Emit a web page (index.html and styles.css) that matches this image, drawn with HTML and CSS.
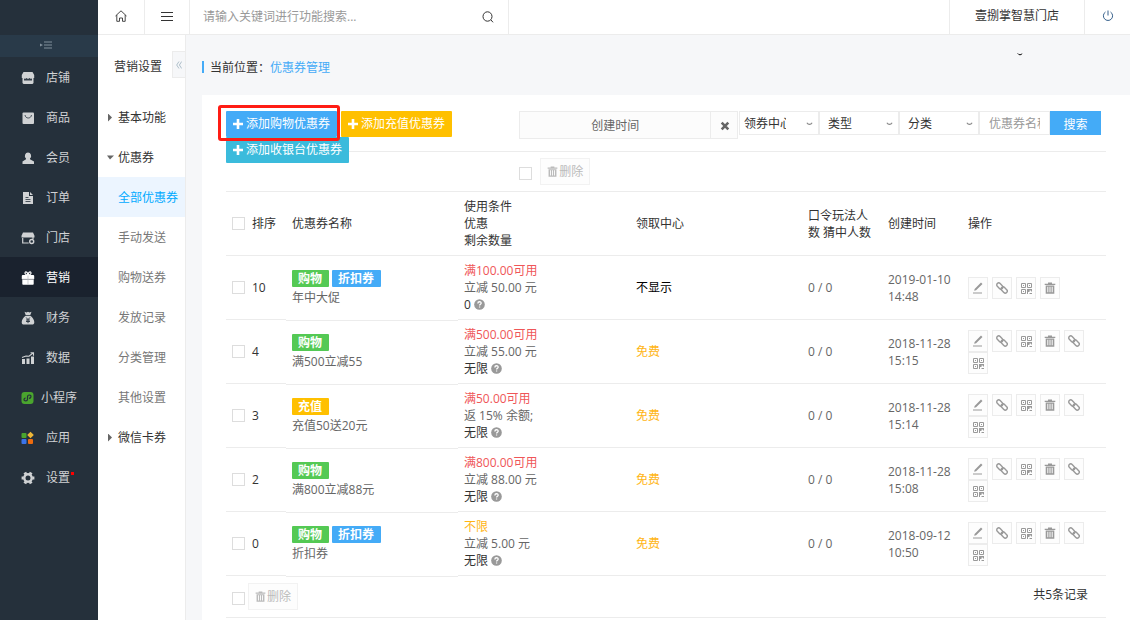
FILE: index.html
```html
<!DOCTYPE html>
<html lang="zh-CN">
  <head>
    <meta charset="UTF-8" />
    <meta name="viewport" content="width=device-width, initial-scale=1.0" />
    <title>优惠券管理</title>
    <link rel="stylesheet" href="styles.css">
  </head>
  <body>
    <svg class="sprite" aria-hidden="true">
      <symbol id="i-plus" viewBox="0 0 10 10"><path d="M3.7 0h2.6v3.7H10v2.6H6.3V10H3.7V6.3H0V3.7h3.7z" /></symbol>
      <symbol id="i-edit" viewBox="0 0 12 12"><path d="M2.200 8.800l.4-1.900L9 .6l1.500 1.400-6.400 6.200zM1 10.500h9v1H1z" /></symbol>
      <symbol id="i-link" viewBox="0 0 12 12">
        <g fill="none" stroke="currentColor" stroke-width="1.400">
          <rect x="0.300" y="2" width="7" height="4" rx="2" transform="rotate(45 3.800 4)" />
          <rect x="4.700" y="6" width="7" height="4" rx="2" transform="rotate(45 8.200 8)" />
        </g>
      </symbol>
      <symbol id="i-qr" viewBox="0 0 12 12">
        <g fill="none" stroke="currentColor">
          <path d="M1.500 1.500h4v4h-4zM7.500 1.500h4v4h-4zM1.500 7.500h4v4h-4z" />
        </g>
        <path d="M3 3h1v1H3zM9 3h1v1H9zM3 9h1v1H3zM7 7h5v2.500h-1V8.500H9.500V10H8v2H7zM9.500 11H12v1H9.500z" />
      </symbol>
      <symbol id="i-trash" viewBox="0 0 12 12"><path fill-rule="evenodd" d="M4 .5h4v1.200h3.300V3H.7V1.700H4zM1.700 3.500h8.600V11.700H1.700zM3.300 4.700v5.600h1V4.700zM5.500 4.700v5.600h1V4.700zM7.700 4.700v5.600h1V4.700z" /></symbol>
      <symbol id="i-help" viewBox="0 0 12 12">
        <circle cx="6" cy="6" r="5.800" />
        <path d="M4.200 4.800c0-2.400 3.700-2.300 3.600-.2 0 1.200-1.700 1.200-1.700 2.600M6.100 8.100v1.300" fill="none" stroke="#fff" stroke-width="1.400" />
      </symbol>
      <symbol id="i-down" viewBox="0 0 8 4"><path d="M1 .6c1.500 2.400 4.500 2.400 6 0" fill="none" stroke="currentColor" stroke-width="1.300" /></symbol>
    </svg>

    <div class="layout">
      <nav class="sidebar">
        <div class="logo"></div>
        <button type="button" class="toggle" aria-label="收起">
          <svg width="12" height="8" viewBox="0 0 12 8"><path d="M3 4L0 2.500v3zM4 .5h8v1H4zM4 3.500h8v1H4zM4 6.500h8v1H4z" fill="currentColor" /></svg>
        </button>
        <a href="#"><svg viewBox="0 0 14 14"><path d="M2.500 1h9L13.200 4v3h-.7v5l-1 1h-9l-1-1V7H.8V4z" /><path d="M3 7.200l1 .8 1.500-1L7 8l1.500-1L10 8l1-.8v2.300H3z" fill="#333d48" /></svg>店铺</a>
        <a href="#"><svg viewBox="0 0 14 14"><rect x="1.500" y="1.500" width="11.500" height="11.500" rx="1" /><path d="M4 4c.5 4 6 4 6.500 0" fill="none" stroke="#25303b" stroke-width="0.800" /></svg>商品</a>
        <a href="#"><svg viewBox="0 0 14 14"><path d="M7 1.500a3.200 3.400 0 0 1 2 6v.7l4 2.300v2.500H1.500v-2.500L5 8.200v-.7a3.200 3.400 0 0 1 2-6z" /></svg>会员</a>
        <a href="#"><svg viewBox="0 0 14 14"><path d="M2 1h6v4h4v8H2zM9 1l3 3H9z" /><path d="M4.500 6.500h3M4.500 8.500h5M4.500 10.500h5" stroke="#25303b" stroke-width="0.800" /></svg>订单</a>
        <a href="#"><svg viewBox="0 0 14 14"><path d="M2 1.500h10l1.500 3.200V6.500H.5V4.700z" /><path d="M1.700 7v5h6M12 6v2" fill="none" stroke="currentColor" stroke-width="1.200" /><circle cx="10.700" cy="10.500" r="2" fill="#25303b" stroke="currentColor" stroke-width="1.400" /></svg>门店</a>
        <a href="#" class="active"><svg viewBox="0 0 14 14"><path d="M1.800 4h10.400q1 0 1 1v3H.8V5q0-1 1-1zM1.300 8.400h11.400V13q0 .8-.8.8H2.100q-.8 0-.8-.8z" /><path d="M7 4v9.800M1 8.200h12" stroke="#b9bcc0" stroke-width="0.700" /><path d="M7 4C4.500 4 3.500 2.500 4.200 1.300S6.800 1.500 7 4c.2-2.500 2.100-3.900 2.800-2.700S9.500 4 7 4" fill="none" stroke="currentColor" stroke-width="1.200" /></svg>营销</a>
        <a href="#"><svg viewBox="0 0 14 14"><path d="M3.500.8l2 .7L7 .7l1.500.8 2-.7L9.300 4H4.700zM4.700 4.700h4.600c2.300 1.500 4 4.300 4 6.500 0 1.500-.8 2.300-2.300 2.300H3c-1.500 0-2.300-.8-2.300-2.300 0-2.200 1.700-5 4-6.500z" /><path d="M5.200 6.500L7 8.700l1.800-2.200M7 8.700v3.500M5 9h4M5 10.500h4" fill="none" stroke="#25303b" stroke-width="0.900" /></svg>财务</a>
        <a href="#"><svg viewBox="0 0 14 14"><path d="M1 8h3v5H1zM5.500 7.500h3V13h-3zM10 5.500h3V13h-3z" /><path d="M1 6.500l4-1.500 3 .2L12 2M9.500 1.700h3v3" fill="none" stroke="currentColor" stroke-width="1.100" /></svg>数据</a>
        <a href="#" class="wide"><svg viewBox="0 0 14 14"><rect x="0.500" y="1" width="12" height="12" rx="3" fill="#4aa52e" /><path d="M8 7.300c2.500 0 2.700-3.300.3-3.300C6.800 4 6.500 5 6.500 6v2.200c0 2.300-3.500 2.300-3.500.3 0-.9.7-1.500 1.700-1.500" fill="none" stroke="#25303b" stroke-width="1.200" /></svg>小程序</a>
        <a href="#"><svg viewBox="0 0 14 14"><rect x="0.500" y="2" width="5" height="5" rx="1" fill="#4aa52e" /><path d="M9.500.7l3.300 3.300-3.300 3.300L6.200 4z" fill="#edb738" /><rect x="0.500" y="8" width="5" height="5" rx="1" fill="#3b73e8" /><rect x="7" y="8" width="5" height="5" rx="1" fill="#ee6b0e" /></svg>应用</a>
        <a href="#"><svg viewBox="0 0 14 14"><circle cx="7" cy="7" r="3.700" fill="none" stroke="currentColor" stroke-width="2.400" /><path d="M2.700 7H.6M13.400 7h-2.100M4.900 3.300L3.800 1.400M10.200 12.600l-1.100-1.900M9.100 3.300l1.100-1.900M3.800 12.600l1.100-1.900" stroke="currentColor" stroke-width="3" /></svg>设置<i class="dot"></i></a>
      </nav>

      <div class="page">
        <header class="topbar">
          <button type="button" class="home" aria-label="首页">
            <svg width="12" height="12" viewBox="0 0 12 12"><path d="M.5 6L6 .8 11.500 6M1.800 5v6.300h2.700V8h3v3.300h2.700V5" fill="none" stroke="currentColor" stroke-width="0.900" /></svg>
          </button>
          <button type="button" class="menu" aria-label="菜单">
            <svg width="12" height="9" viewBox="0 0 12 9"><path d="M0 .5h12M0 4.500h12M0 8.500h12" stroke="currentColor" /></svg>
          </button>
          <form class="search">
            <input type="text" placeholder="请输入关键词进行功能搜索..." aria-label="功能搜索" />
            <button type="button" aria-label="搜索功能">
              <svg width="12" height="12" viewBox="0 0 12 12"><path d="M9 9l2 2.300M10 5.500a4.500 4.700 0 1 1-9 0 4.500 4.700 0 0 1 9 0z" fill="none" stroke="currentColor" /></svg>
            </button>
          </form>
          <a href="#" class="store">壹捌掌智慧门店<svg class="store-arrow"><use href="#i-down" /></svg></a>
          <button type="button" class="power" aria-label="退出">
            <svg width="12" height="12" viewBox="0 0 12 12"><path d="M6 .5v5M3.500 2a4.600 4.600 0 1 0 5 0" fill="none" stroke="currentColor" /></svg>
          </button>
        </header>

        <div class="body">
          <nav class="submenu">
            <h3>营销设置</h3>
            <button type="button" class="collapse" aria-label="收起菜单">
              <svg width="6" height="8" viewBox="0 0 6 8"><path d="M3 .5L.7 4 3 7.500M5.700.5L3.400 4l2.300 3.500" fill="none" stroke="currentColor" /></svg>
            </button>
            <a href="#" class="group">基本功能</a>
            <a href="#" class="group open">优惠券</a>
            <a href="#" class="active">全部优惠券</a>
            <a href="#">手动发送</a>
            <a href="#">购物送券</a>
            <a href="#">发放记录</a>
            <a href="#">分类管理</a>
            <a href="#">其他设置</a>
            <a href="#" class="group">微信卡券</a>
          </nav>

          <main>
            <div class="position">当前位置：<a href="#">优惠券管理</a></div>

            <div class="card">
              <div class="toolbar">
                <div class="add-buttons">
                  <button type="button" class="btn blue marked"><svg><use href="#i-plus" /></svg>添加购物优惠券</button>
                  <button type="button" class="btn yellow"><svg><use href="#i-plus" /></svg>添加充值优惠券</button>
                  <button type="button" class="btn cyan"><svg><use href="#i-plus" /></svg>添加收银台优惠券</button>
                </div>
                <form class="filters">
                  <button type="button" class="date">创建时间</button>
                  <button type="button" class="clear" aria-label="清除">
                    <svg width="10" height="10" viewBox="0 0 10 10"><path d="M1.700 1.700l6.600 6.600M8.300 1.700L1.700 8.300" stroke="currentColor" stroke-width="2.600" /></svg>
                  </button>
                  <label class="select first">
                    <select aria-label="领券中心"><option>领券中心</option></select>
                    <svg><use href="#i-down" /></svg>
                  </label>
                  <label class="select">
                    <select aria-label="类型"><option>类型</option></select>
                    <svg><use href="#i-down" /></svg>
                  </label>
                  <label class="select">
                    <select aria-label="分类"><option>分类</option></select>
                    <svg><use href="#i-down" /></svg>
                  </label>
                  <input type="text" class="keyword" placeholder="优惠券名称" aria-label="优惠券名称" />
                  <button type="button" class="submit">搜索</button>
                </form>
              </div>

              <div class="batch">
                <div class="batch-inner">
                  <input type="checkbox" aria-label="全选" />
                  <button type="button" class="delete" disabled><svg><use href="#i-trash" /></svg>删除</button>
                </div>
              </div>

              <table>
                <colgroup>
                  <col class="col-sort" />
                  <col />
                  <col />
                  <col />
                  <col class="col-small" />
                  <col class="col-small" />
                  <col class="col-action" />
                </colgroup>
                <thead>
                  <tr>
                    <th><label class="check"><input type="checkbox" />排序</label></th>
                    <th>优惠券名称</th>
                    <th>使用条件<br />优惠<br />剩余数量</th>
                    <th>领取中心</th>
                    <th>口令玩法人数 猜中人数</th>
                    <th>创建时间</th>
                    <th>操作</th>
                  </tr>
                </thead>
                <tbody>
                  <tr>
                    <td><label class="check"><input type="checkbox" />10</label></td>
                    <td class="name">
                      <div class="tags"><span class="tag green">购物</span><span class="tag blue">折扣券</span></div>
                      年中大促
                    </td>
                    <td>
                      <div class="red">满100.00可用</div>
                      <div>立减 50.00 元</div>
                      <div class="dark">0 <svg class="help"><use href="#i-help" /></svg></div>
                    </td>
                    <td class="black">不显示</td>
                    <td>0 / 0</td>
                    <td>2019-01-10 14:48</td>
                    <td>
                      <div class="actions">
                        <button type="button" aria-label="编辑"><svg><use href="#i-edit" /></svg></button>
                        <button type="button" aria-label="链接"><svg><use href="#i-link" /></svg></button>
                        <button type="button" aria-label="二维码"><svg><use href="#i-qr" /></svg></button>
                        <button type="button" aria-label="删除"><svg><use href="#i-trash" /></svg></button>
                      </div>
                    </td>
                  </tr>
                  <tr>
                    <td><label class="check"><input type="checkbox" />4</label></td>
                    <td class="name">
                      <div class="tags"><span class="tag green">购物</span></div>
                      满500立减55
                    </td>
                    <td>
                      <div class="red">满500.00可用</div>
                      <div>立减 55.00 元</div>
                      <div class="dark">无限 <svg class="help"><use href="#i-help" /></svg></div>
                    </td>
                    <td class="orange">免费</td>
                    <td>0 / 0</td>
                    <td>2018-11-28 15:15</td>
                    <td>
                      <div class="actions">
                        <button type="button" aria-label="编辑"><svg><use href="#i-edit" /></svg></button>
                        <button type="button" aria-label="链接"><svg><use href="#i-link" /></svg></button>
                        <button type="button" aria-label="二维码"><svg><use href="#i-qr" /></svg></button>
                        <button type="button" aria-label="删除"><svg><use href="#i-trash" /></svg></button>
                        <button type="button" aria-label="领取链接"><svg><use href="#i-link" /></svg></button>
                        <button type="button" aria-label="领取二维码"><svg><use href="#i-qr" /></svg></button>
                      </div>
                    </td>
                  </tr>
                  <tr>
                    <td><label class="check"><input type="checkbox" />3</label></td>
                    <td class="name">
                      <div class="tags"><span class="tag yellow">充值</span></div>
                      充值50送20元
                    </td>
                    <td>
                      <div class="red">满50.00可用</div>
                      <div>返 15% 余额;</div>
                      <div class="dark">无限 <svg class="help"><use href="#i-help" /></svg></div>
                    </td>
                    <td class="orange">免费</td>
                    <td>0 / 0</td>
                    <td>2018-11-28 15:14</td>
                    <td>
                      <div class="actions">
                        <button type="button" aria-label="编辑"><svg><use href="#i-edit" /></svg></button>
                        <button type="button" aria-label="链接"><svg><use href="#i-link" /></svg></button>
                        <button type="button" aria-label="二维码"><svg><use href="#i-qr" /></svg></button>
                        <button type="button" aria-label="删除"><svg><use href="#i-trash" /></svg></button>
                        <button type="button" aria-label="领取链接"><svg><use href="#i-link" /></svg></button>
                        <button type="button" aria-label="领取二维码"><svg><use href="#i-qr" /></svg></button>
                      </div>
                    </td>
                  </tr>
                  <tr>
                    <td><label class="check"><input type="checkbox" />2</label></td>
                    <td class="name">
                      <div class="tags"><span class="tag green">购物</span></div>
                      满800立减88元
                    </td>
                    <td>
                      <div class="red">满800.00可用</div>
                      <div>立减 88.00 元</div>
                      <div class="dark">无限 <svg class="help"><use href="#i-help" /></svg></div>
                    </td>
                    <td class="orange">免费</td>
                    <td>0 / 0</td>
                    <td>2018-11-28 15:08</td>
                    <td>
                      <div class="actions">
                        <button type="button" aria-label="编辑"><svg><use href="#i-edit" /></svg></button>
                        <button type="button" aria-label="链接"><svg><use href="#i-link" /></svg></button>
                        <button type="button" aria-label="二维码"><svg><use href="#i-qr" /></svg></button>
                        <button type="button" aria-label="删除"><svg><use href="#i-trash" /></svg></button>
                        <button type="button" aria-label="领取链接"><svg><use href="#i-link" /></svg></button>
                        <button type="button" aria-label="领取二维码"><svg><use href="#i-qr" /></svg></button>
                      </div>
                    </td>
                  </tr>
                  <tr>
                    <td><label class="check"><input type="checkbox" />0</label></td>
                    <td class="name">
                      <div class="tags"><span class="tag green">购物</span><span class="tag blue">折扣券</span></div>
                      折扣券
                    </td>
                    <td>
                      <div class="orange">不限</div>
                      <div>立减 5.00 元</div>
                      <div class="dark">无限 <svg class="help"><use href="#i-help" /></svg></div>
                    </td>
                    <td class="orange">免费</td>
                    <td>0 / 0</td>
                    <td>2018-09-12 10:50</td>
                    <td>
                      <div class="actions">
                        <button type="button" aria-label="编辑"><svg><use href="#i-edit" /></svg></button>
                        <button type="button" aria-label="链接"><svg><use href="#i-link" /></svg></button>
                        <button type="button" aria-label="二维码"><svg><use href="#i-qr" /></svg></button>
                        <button type="button" aria-label="删除"><svg><use href="#i-trash" /></svg></button>
                        <button type="button" aria-label="领取链接"><svg><use href="#i-link" /></svg></button>
                        <button type="button" aria-label="领取二维码"><svg><use href="#i-qr" /></svg></button>
                      </div>
                    </td>
                  </tr>
                </tbody>
              </table>

              <div class="table-footer">
                <input type="checkbox" aria-label="全选" />
                <button type="button" class="delete" disabled><svg><use href="#i-trash" /></svg>删除</button>
                <span class="total">共5条记录</span>
              </div>
            </div>
          </main>
        </div>
      </div>
    </div>
  </body>
</html>
```
FILE: styles.css
```css
* {
  box-sizing: border-box;
}

body {
  margin: 0;
  background-color: #f6f7f9;
  color: #666;
  font-family: "Open Sans", "Noto Sans CJK SC", sans-serif;
  font-size: 12px;
  line-height: 17px;
}

a {
  color: inherit;
  text-decoration: none;
}

button, input, select {
  margin: 0;
  padding: 0;
  border: 0;
  background: none;
  color: inherit;
  font: inherit;
}

button {
  display: flex;
  align-items: center;
  justify-content: center;
  cursor: pointer;
}

svg {
  flex-shrink: 0;
  fill: currentColor;
}

input[type="checkbox"] {
  appearance: none;
  flex-shrink: 0;
  width: 13px;
  height: 13px;
  border: 1px solid #ddd;
  background-color: #fff;
}

.sprite {
  display: none;
}

.layout {
  display: flex;
  min-height: 100vh;
}

/* sidebar */
.sidebar {
  flex: 0 0 98px;
  background-color: #25303b;
  color: #d0d2d4;
}

.logo {
  height: 35px;
}

.toggle {
  width: 100%;
  height: 22px;
  padding: 0 6px 2px 0;
  background-color: #293a49;
  color: #82909b;
}

.sidebar a {
  display: flex;
  align-items: center;
  gap: 11px;
  height: 40px;
  padding: 1px 0 0 21px;
}

.sidebar a.wide {
  gap: 6px;
}

.sidebar a svg {
  width: 14px;
  height: 14px;
}

.sidebar a.active {
  background-color: #1a222e;
  color: #fff;
}

.dot {
  width: 3px;
  height: 3px;
  margin: -8px 0 0 -10px;
  background-color: #f00;
}

/* topbar */
.page {
  flex: 1;
  min-width: 0;
  display: flex;
  flex-direction: column;
}

.topbar {
  display: flex;
  height: 35px;
  padding-bottom: 1px;
  background-color: #fff;
  box-shadow: inset 0 -1px #ececec;
  color: #333;
}

.home, .menu, .search {
  border-right: 1px solid #ececec;
}

.home, .menu {
  padding-bottom: 2px;
}

.home {
  width: 47px;
}

.menu {
  width: 45px;
}

.search {
  display: flex;
  width: 319px;
  padding: 0 13px;
}

.search input {
  flex: 1;
  min-width: 0;
  padding-bottom: 2px;
}

.search button {
  width: 14px;
}

input::placeholder {
  color: #999;
  opacity: 1;
}

.store {
  position: relative;
  margin-left: auto;
  width: 136px;
  border: 1px solid #ececec;
  border-width: 0 1px;
  line-height: 32px;
  text-align: center;
}

.store-arrow {
  position: absolute;
  top: 53px;
  left: 67px;
  width: 6px;
  height: 3px;
  color: #000;
}

.power {
  width: 45px;
  padding-bottom: 2px;
  color: #37618c;
}

.body {
  flex: 1;
  display: flex;
}

/* submenu */
.submenu {
  position: relative;
  flex: 0 0 88px;
  border-right: 1px solid #ececec;
  background-color: #fff;
  color: #777;
}

.submenu h3 {
  margin: 0;
  padding-left: 16px;
  height: 62px;
  color: #333;
  font-size: 12px;
  font-weight: normal;
  line-height: 64px;
}

.submenu a {
  display: flex;
  align-items: center;
  height: 40px;
  padding: 1px 0 0 20px;
}

.submenu a.active {
  background-color: #ecf5ff;
  color: #0af;
}

.submenu a.group {
  padding-left: 9px;
  color: #333;
}

.group::before {
  content: "";
  width: 11px;
  height: 8px;
  background-color: #666;
  clip-path: polygon(1px 0, 5px 4px, 1px 8px);
}

.group.open::before {
  clip-path: polygon(0 2px, 7px 2px, 3px 6px);
}

.collapse {
  position: absolute;
  top: 16px;
  right: 0;
  width: 13px;
  height: 27px;
  border: 1px solid #ececec;
  border-right: 0;
  background-color: #f6f7f9;
  color: #aebfca;
}

/* content */
main {
  flex: 1;
  min-width: 0;
  display: flex;
  flex-direction: column;
  padding-left: 16px;
}

.position {
  display: flex;
  align-items: center;
  height: 60px;
  padding-top: 4px;
  color: #333;
}

.position::before {
  content: "";
  width: 2px;
  height: 12px;
  margin-right: 6px;
  background-color: #44abf7;
}

.position a {
  color: #44abf7;
}

.card {
  flex: 1;
  padding: 16px 24px 0;
  background-color: #fff;
}

.toolbar, .batch {
  display: grid;
  grid-template-columns: 1fr 2fr;
  border-bottom: 1px solid #ececec;
}

.toolbar {
  height: 41px;
}

.batch {
  height: 40px;
}

.add-buttons {
  display: flex;
  flex-wrap: wrap;
  align-content: flex-start;
  column-gap: 4px;
}

.btn {
  position: relative;
  gap: 3px;
  height: 26px;
  padding: 0 7px 1px;
  border-radius: 1px;
  color: #fff;
}

.btn svg {
  width: 10px;
  height: 10px;
}

.blue {
  background-color: #44abf7;
}

.yellow {
  background-color: #ffc000;
}

.cyan {
  background-color: #3bbbdc;
}

.green {
  background-color: #54c954;
}

.marked {
  z-index: 1;
}

.marked::after {
  content: "";
  position: absolute;
  inset: -6px -3px -4px -8px;
  border: 3px solid #ff1c14;
  border-radius: 3px;
}

.filters {
  display: flex;
  align-items: flex-start;
  padding-right: 5px;
}

.date, .clear {
  height: 28px;
  border: 1px solid #ececec;
  background-color: #fcfcfc;
}

.date {
  flex: 1;
}

.clear {
  width: 28px;
  margin-left: -1px;
  padding: 2px 0 0 1px;
}

.select {
  position: relative;
  width: 80px;
}

.select select {
  appearance: none;
  display: block;
  width: 100%;
  height: 24px;
  padding: 1px 32px 0 8px;
  border: 1px solid #ececec;
  background-color: #fff;
  color: #333;
}

.select.first {
  margin-left: 1px;
}

.select.first select {
  padding-left: 4px;
}

.select svg {
  position: absolute;
  top: 11px;
  right: 6px;
  width: 7px;
  height: 4px;
  color: #888;
}

.keyword {
  width: 71px;
  height: 24px;
  padding: 0 9px;
  border: 1px solid #ececec;
}

.submit {
  width: 51px;
  height: 24px;
  padding-top: 2px;
  background-color: #44abf7;
  color: #fff;
}

.batch-inner {
  grid-column: 2;
  display: flex;
  align-items: center;
  gap: 8px;
}

.batch-inner input, .table-footer input {
  margin-top: 3px;
}

.delete {
  gap: 1px;
  width: 50px;
  height: 27px;
  border: 1px solid #f2f2f2;
  background-color: #fdfdfd;
  color: #bbb;
}

.delete svg {
  width: 11px;
  height: 11px;
}

/* table */
table {
  width: 100%;
  table-layout: fixed;
  border-spacing: 0;
}

.col-sort {
  width: 60px;
}

.col-small {
  width: 80px;
}

.col-action {
  width: 144px;
}

th, td {
  height: 64px;
  padding: 6px;
  border-bottom: 1px solid #ececec;
  text-align: left;
  vertical-align: middle;
}

th {
  color: #333;
  font-weight: normal;
}

.check {
  display: flex;
  align-items: center;
  gap: 7px;
  color: #333;
}

.name {
  border-color: transparent;
  box-shadow: 0 1px #ececec;
}

.tags {
  display: flex;
  gap: 3px;
  margin-bottom: 2px;
}

.tag {
  padding: 0 7px 0 6px;
  border-radius: 1px;
  color: #fff;
  font-weight: bold;
}

.red {
  color: #ef5658;
}

.orange {
  color: #ffb515;
}

.dark {
  color: #333;
}

.black {
  color: #000;
}

.help {
  width: 11px;
  height: 11px;
  color: #999;
  vertical-align: -1px;
}

.actions {
  display: flex;
  flex-wrap: wrap;
  column-gap: 4px;
}

.actions button {
  width: 20px;
  height: 22px;
  border: 1px solid #ececec;
  background-color: #fdfdfd;
  color: #999;
}

.actions svg {
  width: 12px;
  height: 12px;
}

.table-footer {
  display: flex;
  align-items: center;
  gap: 3px;
  height: 42px;
  padding: 0 18px 0 6px;
  border-bottom: 1px solid #ececec;
}

.total {
  margin: 0 0 4px auto;
  color: #333;
}
```
